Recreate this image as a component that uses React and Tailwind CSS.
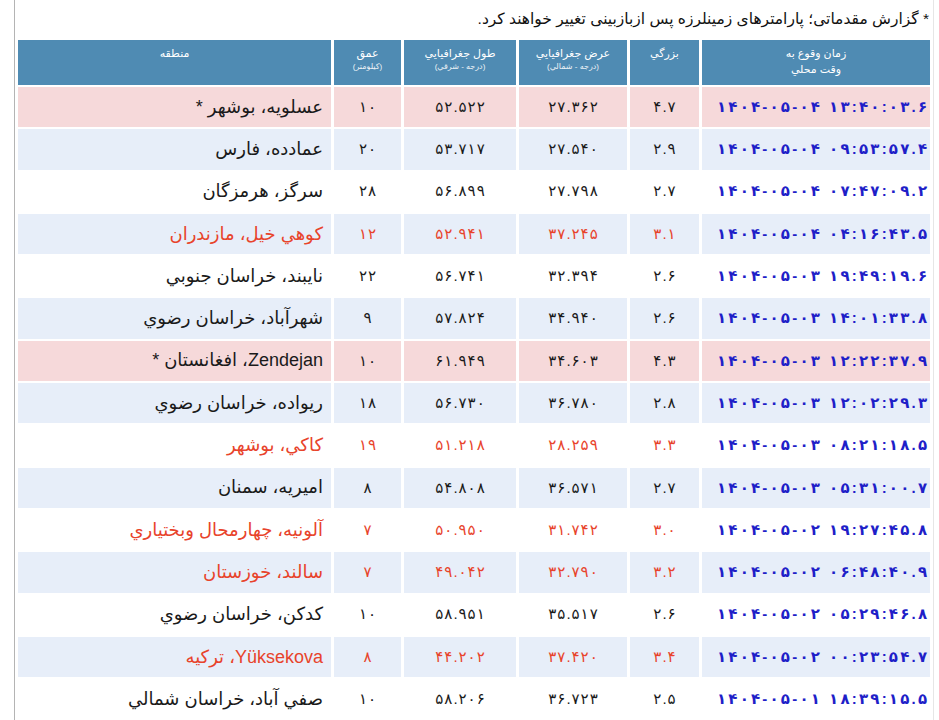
import React from 'react';

const rows = [
  { date: '۱۴۰۴-۰۵-۰۴ ۱۳:۴۰:۰۳.۶', mag: '۴.۷', lat: '۲۷.۳۶۲', lon: '۵۲.۵۲۲', depth: '۱۰', region: 'عسلويه، بوشهر *', star: true },
  { date: '۱۴۰۴-۰۵-۰۴ ۰۹:۵۳:۵۷.۴', mag: '۲.۹', lat: '۲۷.۵۴۰', lon: '۵۳.۷۱۷', depth: '۲۰', region: 'عمادده، فارس' },
  { date: '۱۴۰۴-۰۵-۰۴ ۰۷:۴۷:۰۹.۲', mag: '۲.۷', lat: '۲۷.۷۹۸', lon: '۵۶.۸۹۹', depth: '۲۸', region: 'سرگز، هرمزگان' },
  { date: '۱۴۰۴-۰۵-۰۴ ۰۴:۱۶:۴۳.۵', mag: '۳.۱', lat: '۳۷.۲۴۵', lon: '۵۲.۹۴۱', depth: '۱۲', region: 'كوهي خيل، مازندران', red: true },
  { date: '۱۴۰۴-۰۵-۰۳ ۱۹:۴۹:۱۹.۶', mag: '۲.۶', lat: '۳۲.۳۹۴', lon: '۵۶.۷۴۱', depth: '۲۲', region: 'نايبند، خراسان جنوبي' },
  { date: '۱۴۰۴-۰۵-۰۳ ۱۴:۰۱:۳۳.۸', mag: '۲.۶', lat: '۳۴.۹۴۰', lon: '۵۷.۸۲۴', depth: '۹', region: 'شهرآباد، خراسان رضوي' },
  { date: '۱۴۰۴-۰۵-۰۳ ۱۲:۲۲:۳۷.۹', mag: '۴.۳', lat: '۳۴.۶۰۳', lon: '۶۱.۹۴۹', depth: '۱۰', region: 'Zendejan، افغانستان *', star: true },
  { date: '۱۴۰۴-۰۵-۰۳ ۱۲:۰۲:۲۹.۳', mag: '۲.۸', lat: '۳۶.۷۸۰', lon: '۵۶.۷۳۰', depth: '۱۸', region: 'ريواده، خراسان رضوي' },
  { date: '۱۴۰۴-۰۵-۰۳ ۰۸:۲۱:۱۸.۵', mag: '۳.۳', lat: '۲۸.۲۵۹', lon: '۵۱.۲۱۸', depth: '۱۹', region: 'كاكي، بوشهر', red: true },
  { date: '۱۴۰۴-۰۵-۰۳ ۰۵:۳۱:۰۰.۷', mag: '۲.۷', lat: '۳۶.۵۷۱', lon: '۵۴.۸۰۸', depth: '۸', region: 'اميريه، سمنان' },
  { date: '۱۴۰۴-۰۵-۰۲ ۱۹:۲۷:۴۵.۸', mag: '۳.۰', lat: '۳۱.۷۴۲', lon: '۵۰.۹۵۰', depth: '۷', region: 'آلونيه، چهارمحال وبختياري', red: true },
  { date: '۱۴۰۴-۰۵-۰۲ ۰۶:۴۸:۴۰.۹', mag: '۳.۲', lat: '۳۲.۷۹۰', lon: '۴۹.۰۴۲', depth: '۷', region: 'سالند، خوزستان', red: true },
  { date: '۱۴۰۴-۰۵-۰۲ ۰۵:۲۹:۴۶.۸', mag: '۲.۶', lat: '۳۵.۵۱۷', lon: '۵۸.۹۵۱', depth: '۱۰', region: 'كدكن، خراسان رضوي' },
  { date: '۱۴۰۴-۰۵-۰۲ ۰۰:۲۳:۵۴.۷', mag: '۳.۴', lat: '۳۷.۴۲۰', lon: '۴۴.۲۰۲', depth: '۸', region: 'Yüksekova، تركيه', red: true },
  { date: '۱۴۰۴-۰۵-۰۱ ۱۸:۳۹:۱۵.۵', mag: '۲.۵', lat: '۳۶.۷۲۳', lon: '۵۸.۲۰۶', depth: '۱۰', region: 'صفي آباد، خراسان شمالي' },
];

// chrome won't letter-space arabic digits, so spread them by hand
const Digits = ({ text, wide }) => (
  <span dir="ltr">
    {[...text].map((c, i) => (
      <span key={i} className={c === ' ' ? 'inline-block w-[7px]' : wide ? 'inline-block px-[1.1px]' : 'inline-block px-[0.5px]'}>
        {c === ' ' ? '' : c}
      </span>
    ))}
  </span>
);

const HeadCell = ({ title, sub, title2 }) => (
  <th className="bg-[#4f8bb3] text-white font-normal align-top pt-[5px] text-[11px] leading-[16px]">
    <div>{title}</div>
    {title2 && <div>{title2}</div>}
    {sub && <div className="text-[8px] leading-[12px] opacity-90">{sub}</div>}
  </th>
);

export default function App() {
  return (
    <div
      className="w-[939px] h-[720px] overflow-hidden bg-white"
      style={{ fontFamily: '"Liberation Sans", "DejaVu Sans", sans-serif' }}
    >
      <div className="ml-[14px] w-[920px] h-full border-l border-[#b4b4b4] border-r border-r-[#e6e6e6]">
        <p dir="rtl" className="h-[38px] pt-[9px] pr-[4px] text-[15.5px] leading-[20px] text-[#111]">
          * گزارش مقدماتی؛ پارامترهای زمینلرزه پس ازبازبینی تغییر خواهند کرد.
        </p>
        <table dir="rtl" className="w-full table-fixed border-separate border-spacing-x-[3px] border-spacing-y-[2px]">
          <colgroup>
            <col className="w-[228px]" />
            <col className="w-[69px]" />
            <col className="w-[108px]" />
            <col className="w-[112px]" />
            <col className="w-[67px]" />
            <col />
          </colgroup>
          <thead>
            <tr className="h-[45px]">
              <HeadCell title="زمان وقوع به" title2="وقت محلي" />
              <HeadCell title="بزرگي" />
              <HeadCell title="عرض جغرافيايي" sub="(درجه - شمالي)" />
              <HeadCell title="طول جغرافيايي" sub="(درجه - شرقي)" />
              <HeadCell title="عمق" sub="(كيلومتر)" />
              <HeadCell title="منطقه" />
            </tr>
          </thead>
          <tbody>
            {rows.map((r, i) => {
              const bg = r.star ? 'bg-[#f6d9da]' : i % 2 === 1 ? 'bg-[#e7eef9]' : 'bg-white';
              const color = r.red ? 'text-[#e8432b]' : 'text-[#1a1a1a]';
              return (
                <tr key={i} className={`h-[40.3px] ${bg}`}>
                  <td className="text-center pl-[12px] font-bold text-[15px] text-[#1f1fc8]">
                    <Digits text={r.date} wide />
                  </td>
                  <td className={`text-center text-[15px] ${color}`}><Digits text={r.mag} /></td>
                  <td className={`text-center text-[15px] ${color}`}><Digits text={r.lat} /></td>
                  <td className={`text-center text-[15px] ${color}`}><Digits text={r.lon} /></td>
                  <td className={`text-center text-[15px] ${color}`}><Digits text={r.depth} /></td>
                  <td className={`text-right pr-[8px] text-[18px] ${color}`}>{r.region}</td>
                </tr>
              );
            })}
          </tbody>
        </table>
      </div>
    </div>
  );
}
